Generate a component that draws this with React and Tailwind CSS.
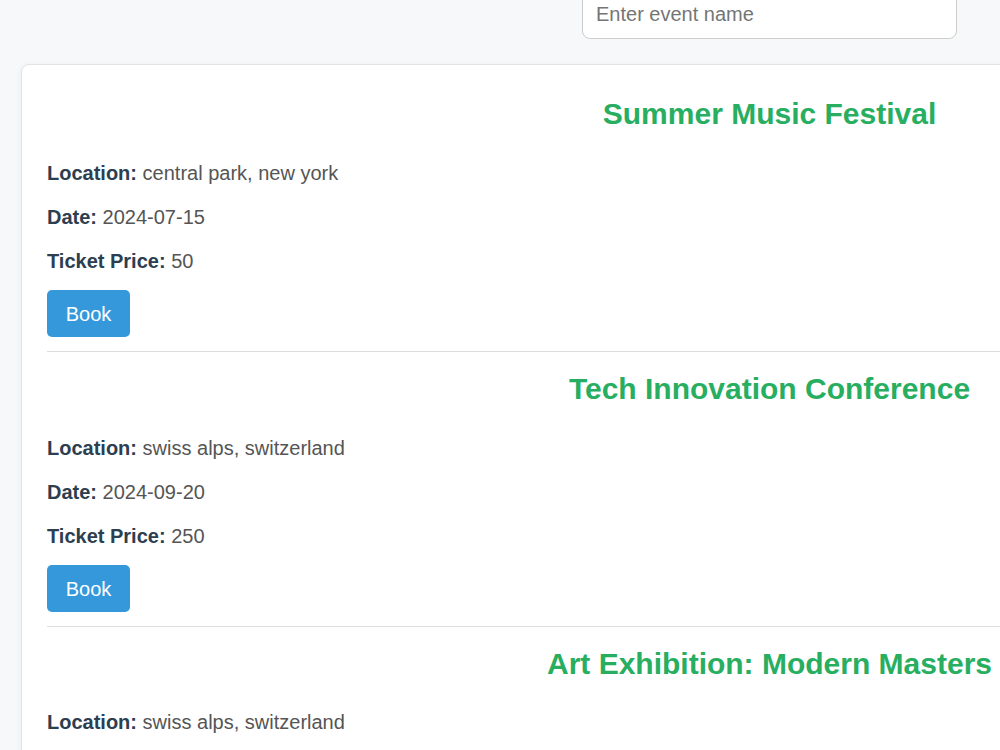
import React from "react";

const events = [
  { name: "Summer Music Festival", location: "central park, new york", date: "2024-07-15", price: 50 },
  { name: "Tech Innovation Conference", location: "swiss alps, switzerland", date: "2024-09-20", price: 250 },
  { name: "Art Exhibition: Modern Masters", location: "swiss alps, switzerland", date: "2024-10-05", price: 75 },
];

function Field({ label, value, first }) {
  return (
    <p className={`${first ? "mt-[28.2px]" : "mt-[18.2px]"} text-[20px] leading-[26px] text-[#555]`}>
      <strong className="font-bold text-[#2c3e50]">{label}:</strong> {value}
    </p>
  );
}

function EventItem({ ev }) {
  return (
    <div className="border-b border-[#dddddd] pt-[19px] pb-[13.9px]">
      <h2 className="text-center text-[30px] leading-[35px] font-bold text-[#27ae60]">{ev.name}</h2>
      <Field label="Location" value={ev.location} first />
      <Field label="Date" value={ev.date} />
      <Field label="Ticket Price" value={ev.price} />
      <button className="mt-[16px] h-[47.5px] px-[18.7px] rounded-[5px] bg-[#3498db] text-white text-[20px] leading-none">
        Book
      </button>
    </div>
  );
}

export default function App() {
  return (
    <div className="w-[1000px] h-[750px] overflow-hidden bg-[#f7f8fa] font-['Liberation_Sans',Arial,sans-serif]">
      <div className="w-[1539px] px-[21px]">
        <div className="flex justify-center -mt-[9.7px]">
          <input
            type="text"
            placeholder="Enter event name"
            className="w-[375px] h-[49px] px-[13px] rounded-lg border border-[#cccccc] bg-white text-[20px] text-[#333] placeholder:text-[#757575] outline-none"
          />
        </div>
        <div className="mt-[24.7px] bg-white border border-[#e3e3e3] rounded-lg shadow-[0_2px_8px_rgba(0,0,0,0.05)] px-[25px] pt-[12.4px]">
          {events.map((ev) => (
            <EventItem key={ev.name} ev={ev} />
          ))}
        </div>
      </div>
    </div>
  );
}
